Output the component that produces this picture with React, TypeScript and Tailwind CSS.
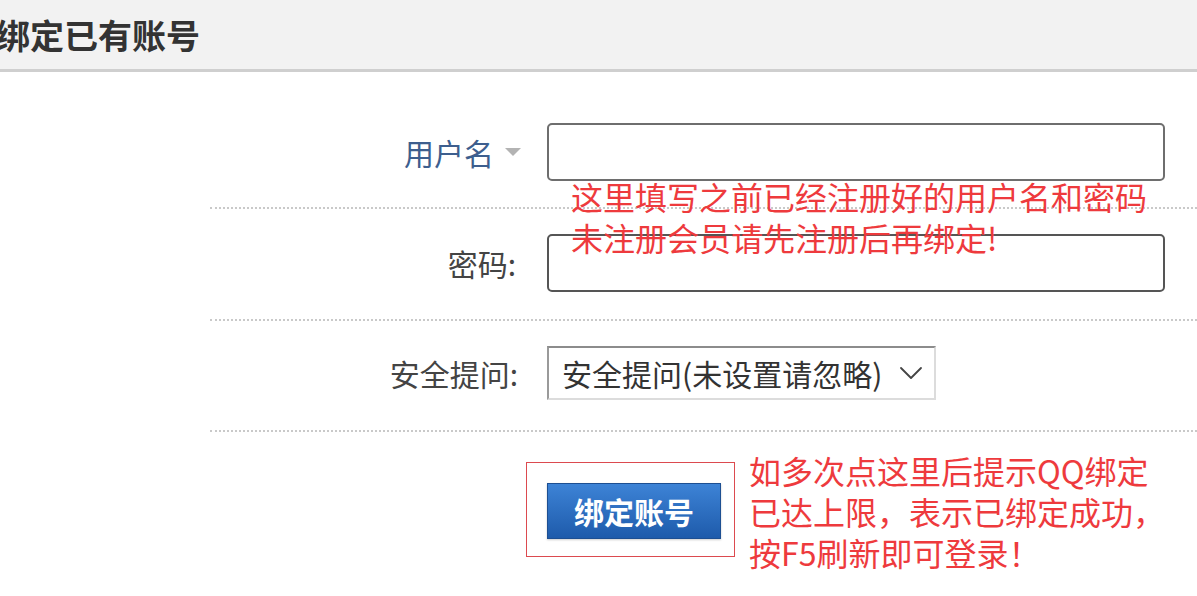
import { ChevronDown } from "lucide-react";

const cjk = { fontFamily: "'Noto Sans CJK SC', 'Noto Sans', sans-serif" };

function Row({
  label,
  children,
  top,
  bottom,
}: {
  label: React.ReactNode;
  children: React.ReactNode;
  top: string;
  bottom: string;
}) {
  return (
    <div className={`flex items-center border-b-2 border-dotted border-[#c9c9c9] ${top} ${bottom}`}>
      <div className="w-[308px] flex justify-end items-center text-[30px] leading-none">{label}</div>
      <div className="ml-[29px]">{children}</div>
    </div>
  );
}

export default function App() {
  return (
    <div className="relative w-[1197px] h-[596px] bg-white overflow-hidden text-[#333]" style={cjk}>
      {/* header */}
      <div className="h-[72px] bg-[#f2f2f2] border-b-[3px] border-[#cfcfcf] flex items-center">
        <h1 className="ml-[-4px] text-[34px] font-bold text-[#333] leading-none">绑定已有账号</h1>
      </div>

      {/* form */}
      <div className="ml-[210px] pt-[25px]">
        <Row
          top="pt-[26px]"
          bottom="pb-[26px]"
          label={
            <>
              <span className="text-[#3d5e8e]">用户名</span>
              <svg width="18" height="10" viewBox="0 0 18 10" className="ml-[10px] mr-[-4px]">
                <polygon points="1,1 17,1 9,9" fill="#b3b3b3" />
              </svg>
            </>
          }
        >
          <input className="block w-[618px] h-[58px] rounded-[5px] border-2 border-[#6e6e6e] bg-white outline-none" />
        </Row>

        <Row top="pt-[25px]" bottom="pb-[27px]" label={<span className="text-[#444] mr-[2px]">密码:</span>}>
          <input
            type="password"
            className="block w-[618px] h-[58px] rounded-[5px] border-2 border-[#555] bg-white outline-none"
          />
        </Row>

        <Row top="pt-[25px]" bottom="pb-[30px]" label={<span className="text-[#444]">安全提问:</span>}>
          <div className="w-[389px] h-[54px] flex items-center border-2 border-[#dcdcdc] border-t-[#8c8c8c] border-l-[#9a9a9a] bg-white">
            <span className="ml-[13px] text-[30px] leading-none text-[#333]">安全提问(未设置请忽略)</span>
            <ChevronDown size={40} strokeWidth={1.1} className="ml-auto mr-[3px] text-[#444]" />
          </div>
        </Row>

        <div className="pt-[30px] pl-[316px]">
          <div className="w-[209px] h-[95px] border border-[#dc4a4f] pl-[20px] pt-[20px]">
            <button className="w-[174px] h-[56px] border border-[#1d4f92] bg-gradient-to-b from-[#3d83d6] to-[#1e5bab] text-white text-[30px] font-bold leading-none shadow-[0_1px_2px_rgba(0,0,0,0.2)]">
              绑定账号
            </button>
          </div>
        </div>
      </div>

      {/* red annotations */}
      <div className="absolute left-[571px] top-[176px] text-[32px] leading-[41px] text-[#ee3a3d] whitespace-nowrap">
        <div>这里填写之前已经注册好的用户名和密码</div>
        <div>未注册会员请先注册后再绑定!</div>
      </div>
      <div className="absolute left-[749px] top-[450px] text-[32px] leading-[41px] text-[#ee3a3d] whitespace-nowrap">
        <div>如多次点这里后提示QQ绑定</div>
        <div>已达上限，表示已绑定成功，</div>
        <div>按F5刷新即可登录！</div>
      </div>
    </div>
  );
}
